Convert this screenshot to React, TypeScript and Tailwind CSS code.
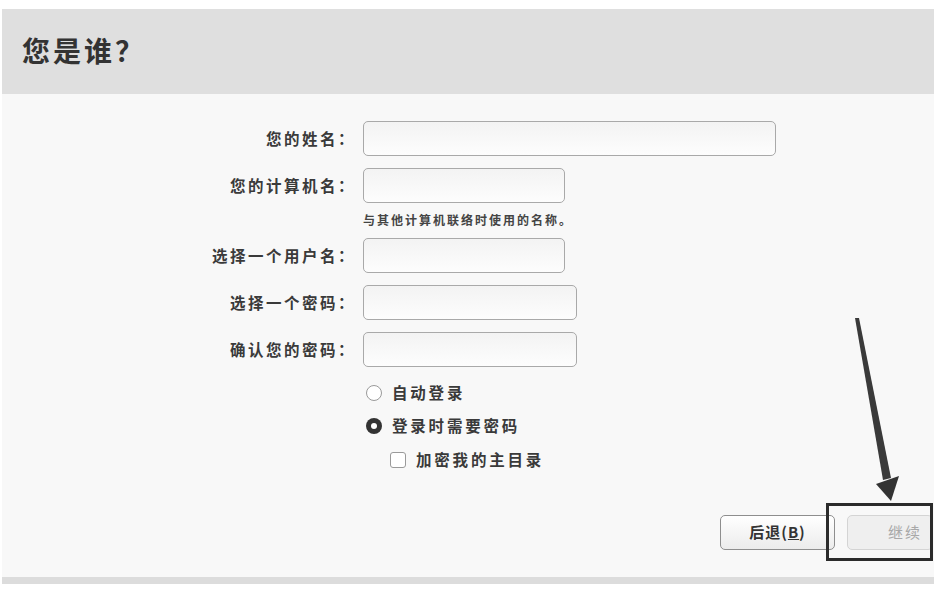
import React from 'react';

const font = { fontFamily: '"Noto Sans CJK SC", "Noto Sans", sans-serif' };

const Field = ({ label, width }: { label: string; width: string }) => (
  <div className="flex items-center">
    <div className="w-[354px] shrink-0 text-right text-[15.5px] font-bold tracking-[2.5px] text-[#3a3a3a]">{label}</div>
    <div
      className={`ml-[7px] h-[35px] ${width} rounded-[5px] border-[1.5px] border-[#a9a9a9] bg-gradient-to-b from-[#f3f3f3] to-[#fdfdfd]`}
    />
  </div>
);

const App = () => {
  return (
    <div className="relative h-[589px] w-[937px] overflow-hidden bg-white" style={font}>
      <div className="ml-[2px] mt-[9px] w-[932px]">
        {/* Header */}
        <div className="flex h-[85px] items-center bg-[#dfdfdf] pl-[20px] pb-[4px]">
          <h1 className="text-[28px] font-bold tracking-[3px] text-[#333]">您是谁？</h1>
        </div>

        {/* Body */}
        <div className="relative h-[483px] bg-[#f8f8f8] pt-[27px]">
          <div className="flex flex-col">
            <Field label="您的姓名：" width="w-[413px]" />
            <div className="mt-[12px]">
              <Field label="您的计算机名：" width="w-[202px]" />
            </div>
            <div className="ml-[361px] mt-[8px] text-[12px] font-bold tracking-[2px] text-[#444]">与其他计算机联络时使用的名称。</div>
            <div className="mt-[9px]">
              <Field label="选择一个用户名：" width="w-[202px]" />
            </div>
            <div className="mt-[12px]">
              <Field label="选择一个密码：" width="w-[214px]" />
            </div>
            <div className="mt-[12px]">
              <Field label="确认您的密码：" width="w-[214px]" />
            </div>

            {/* Login options */}
            <div className="ml-[364px] mt-[16px] flex flex-col text-[15.5px] font-bold tracking-[2.8px] text-[#3a3a3a]">
              <label className="flex h-[20px] items-center gap-[10px]">
                <span className="h-[16px] w-[16px] rounded-full border-[1.5px] border-[#9a9a9a] bg-white" />
                <span>自动登录</span>
              </label>
              <label className="mt-[13px] flex h-[20px] items-center gap-[10px]">
                <span className="flex h-[16px] w-[16px] items-center justify-center rounded-full bg-[#333]">
                  <span className="h-[6px] w-[6px] rounded-full bg-white" />
                </span>
                <span>登录时需要密码</span>
              </label>
              <label className="ml-[24px] mt-[14px] flex h-[20px] items-center gap-[10px]">
                <span className="h-[16px] w-[16px] rounded-[3px] border-[1.5px] border-[#9a9a9a] bg-white" />
                <span>加密我的主目录</span>
              </label>
            </div>
          </div>

          {/* Buttons */}
          <div className="absolute right-[1px] top-[421px] flex gap-[12px]">
            <button className="flex h-[35px] w-[115px] items-center justify-center rounded-[5px] border-[1.5px] border-[#8e8e8e] bg-gradient-to-b from-[#ffffff] to-[#ececec] text-[15px] font-bold tracking-[1px] text-[#333]">
              后退(<span className="underline">B</span>)
            </button>
            <button className="flex h-[35px] w-[86px] items-center justify-end rounded-[5px] border-[1.5px] border-[#d4d4d4] bg-[#efefef] pr-[10px] text-[15px] tracking-[2px] text-[#a8a8a8]">
              继续
            </button>
          </div>
        </div>

        <div className="h-[7px] bg-[#dcdcdc]" />
      </div>

      {/* Annotation: box and arrow */}
      <div className="absolute left-[826px] top-[503px] h-[58px] w-[107px] border-[3px] border-[#2b2b2b]" />
      <svg className="absolute left-0 top-0" width="937" height="589" viewBox="0 0 937 589">
        <polygon points="855,318 859,318 891,478 883,480" fill="#3a3a3a" />
        <polygon points="876,484 899,476 891,501" fill="#333" />
      </svg>
    </div>
  );
};

export default App;
